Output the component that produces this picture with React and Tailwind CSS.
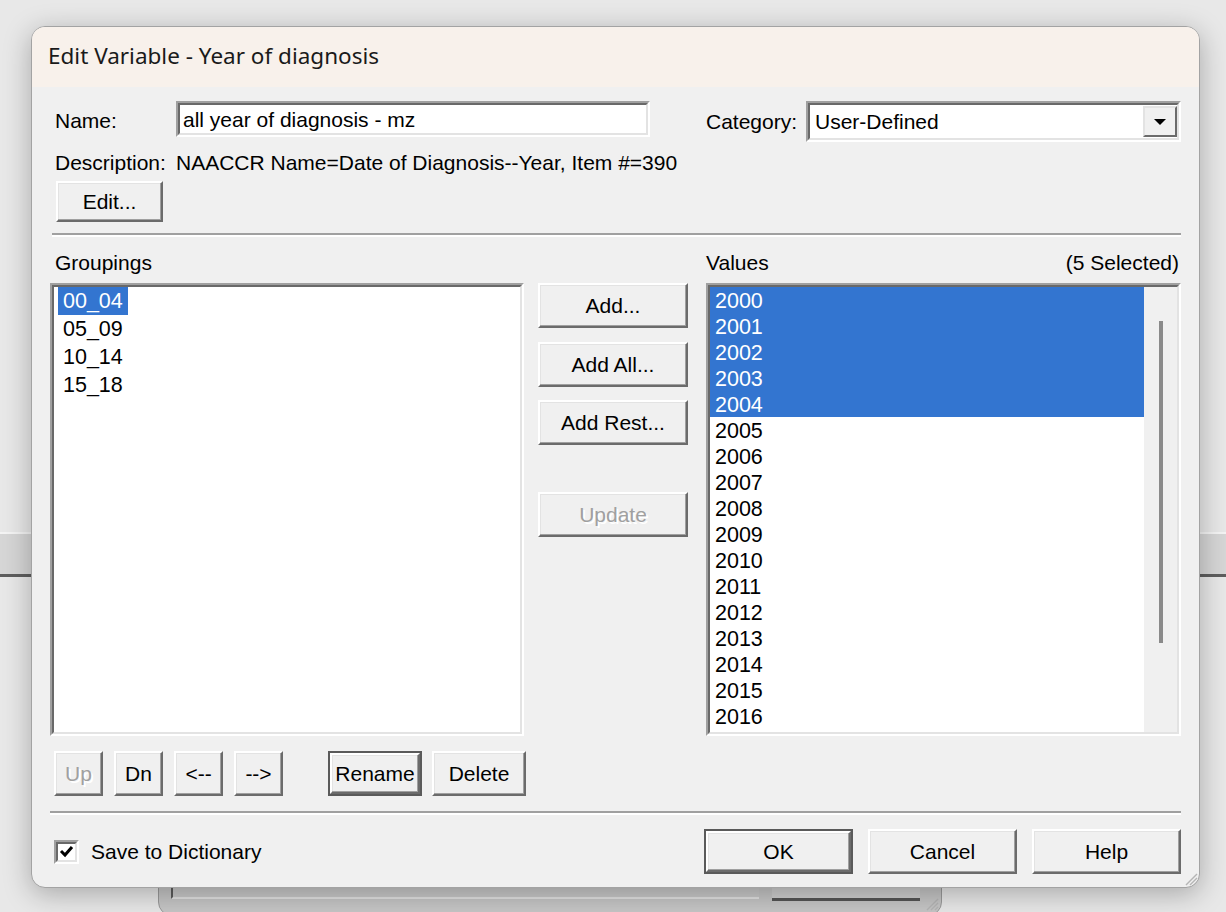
import React from 'react';

const GROUPINGS = ['00_04', '05_09', '10_14', '15_18'];
const VALUES = [
  '2000', '2001', '2002', '2003', '2004', '2005', '2006', '2007', '2008',
  '2009', '2010', '2011', '2012', '2013', '2014', '2015', '2016',
];
const SELECTED = 5;

// classic raised button; default buttons get the dark outer frame
function Btn({ children, className = '', disabled = false, isDefault = false }) {
  const inner = (
    <div className="flex h-full w-full items-center justify-center border-2 border-t-white border-l-white border-r-[#6b6b6b] border-b-[#6b6b6b] bg-[#f0f0f0] shadow-[inset_-1px_-1px_0_#a0a0a0,inset_1px_1px_0_#e3e3e3]">
      <span
        className={
          disabled
            ? 'text-[#a0a0a0] [text-shadow:2px_2px_0_#ffffff]'
            : 'text-black'
        }
      >
        {children}
      </span>
    </div>
  );
  if (isDefault) {
    return <div className={`border-2 border-[#5a5a5a] ${className}`}>{inner}</div>;
  }
  return <div className={className}>{inner}</div>;
}

// classic sunken field frame
function Sunken({ children, className = '', innerClass = '' }) {
  return (
    <div className={`border-2 border-t-[#a0a0a0] border-l-[#a0a0a0] border-r-white border-b-white ${className}`}>
      <div className={`h-full w-full border-2 border-t-[#696969] border-l-[#696969] border-r-[#e3e3e3] border-b-[#e3e3e3] bg-white ${innerClass}`}>
        {children}
      </div>
    </div>
  );
}

function Separator({ className = '' }) {
  return <div className={`h-[4px] border-t-2 border-b-2 border-t-[#a0a0a0] border-b-white ${className}`} />;
}

function ResizeGrip({ className = '' }) {
  return (
    <svg width="14" height="14" viewBox="0 0 14 14" className={className}>
      <g stroke="#b5b5b5" strokeWidth="1.4">
        <line x1="13" y1="2" x2="2" y2="13" />
        <line x1="13" y1="6" x2="6" y2="13" />
        <line x1="13" y1="10" x2="10" y2="13" />
      </g>
    </svg>
  );
}

export default function App() {
  return (
    <div className="relative h-[912px] w-[1226px] overflow-hidden bg-[#e8e8e8] font-['Liberation_Sans',Arial,sans-serif] text-[21px] leading-none text-black">
      {/* window behind: horizontal band */}
      <div className="absolute left-0 right-0 top-[532px] h-[45px] border-t-2 border-b-[3px] border-t-[#f4f4f4] border-b-[#5e5e5e] bg-[#d6d6d6]" />

      {/* window behind, bottom edge */}
      <div className="absolute left-[158px] top-[800px] h-[116px] w-[784px] rounded-b-[14px] border border-[#9a9a9a] bg-[#c6c6c6]">
        <div className="absolute left-[12px] top-[40px] h-[58px] w-[588px] border-l-2 border-b-2 border-l-[#5c5c5c] border-b-[#e2e2e2] bg-[#c9c9c9]" />
        <div className="absolute left-[613px] top-[40px] h-[60px] w-[148px] border-b-[3px] border-b-[#555555] bg-[#cfcfcf]" />
        <ResizeGrip className="absolute right-[2px] bottom-[4px]" />
      </div>

      {/* dialog */}
      <div className="absolute left-[31px] top-[26px] flex h-[862px] w-[1169px] flex-col overflow-hidden rounded-[14px] border border-[#a3a3a3] bg-[#f0f0f0] shadow-[0_6px_28px_rgba(0,0,0,0.28)]">
        {/* title bar */}
        <div className="flex h-[60px] shrink-0 items-center bg-[#f8f1eb] pl-[16px] pb-[2px] font-['Noto_Sans',sans-serif] text-[22.5px] text-[#1a1a1a]">
          Edit Variable - Year of diagnosis
        </div>

        <div className="flex flex-1 flex-col px-[18px]">
          {/* name / category */}
          <div className="mt-[14px] flex h-[41px] items-start">
            <div className="ml-[5px] flex h-[38px] w-[121px] items-center">Name:</div>
            <Sunken className="h-[36px] w-[474px]" innerClass="flex items-center pl-[3px]">
              all year of diagnosis - mz
            </Sunken>
            <div className="ml-[56px] flex h-[41px] w-[100px] items-center">Category:</div>
            <Sunken className="h-[41px] w-[375px]" innerClass="flex items-center justify-between pl-[5px]">
              <span>User-Defined</span>
              <div className="h-[31px] w-[34px]">
                <div className="flex h-full w-full items-center justify-center border-2 border-t-[#e3e3e3] border-l-[#e3e3e3] border-r-[#6b6b6b] border-b-[#6b6b6b] bg-[#f0f0f0]">
                  <svg width="14" height="8" viewBox="0 0 14 8">
                    <polygon points="1,1 13,1 7,7" fill="#000" />
                  </svg>
                </div>
              </div>
            </Sunken>
          </div>

          {/* description */}
          <div className="mt-[8px] flex h-[24px] items-center pl-[5px]">
            <span className="w-[121px]">Description:</span>
            <span>NAACCR Name=Date of Diagnosis--Year, Item #=390</span>
          </div>

          <Btn className="ml-[6px] mt-[7px] h-[41px] w-[107px]">Edit...</Btn>

          <Separator className="mt-[11px] ml-[2px]" />

          {/* list labels */}
          <div className="mt-[13px] flex h-[24px] items-center">
            <div className="w-[474px] pl-[5px]">Groupings</div>
            <div className="ml-[182px] flex flex-1 justify-between pr-[2px]">
              <span>Values</span>
              <span>(5 Selected)</span>
            </div>
          </div>

          {/* lists */}
          <div className="mt-[9px] flex h-[453px]">
            <Sunken className="h-full w-[474px]" innerClass="flex flex-col">
              {GROUPINGS.map((g, i) => (
                <div key={g} className="flex h-[28px] items-center">
                  <span
                    className={`ml-[4px] flex h-[28px] items-center px-[5px] pt-[1px] text-[21.5px] ${
                      i === 0 ? 'bg-[#3375d0] text-white' : ''
                    }`}
                  >
                    {g}
                  </span>
                </div>
              ))}
            </Sunken>

            <div className="ml-[14px] flex w-[150px] flex-col">
              <Btn className="h-[45px]">Add...</Btn>
              <Btn className="mt-[14px] h-[45px]">Add All...</Btn>
              <Btn className="mt-[13px] h-[45px]">Add Rest...</Btn>
              <Btn className="mt-[47px] h-[45px]" disabled>
                Update
              </Btn>
            </div>

            <Sunken className="ml-[18px] h-full w-[475px]" innerClass="flex overflow-hidden">
              <div className="flex flex-1 flex-col">
                {VALUES.map((v, i) => (
                  <div
                    key={v}
                    className={`flex h-[26px] shrink-0 items-center pl-[5px] pt-[3px] text-[21.5px] ${
                      i < SELECTED ? 'bg-[#3375d0] text-white' : ''
                    }`}
                  >
                    {v}
                  </div>
                ))}
              </div>
              <div className="flex w-[33px] shrink-0 justify-center bg-[#f0f0f0] pt-[34px]">
                <div className="h-[322px] w-[4px] bg-[#8a8a8a]" />
              </div>
            </Sunken>
          </div>

          {/* grouping buttons */}
          <div className="mt-[15px] flex h-[45px]">
            <Btn className="ml-[4px] w-[49px]" disabled>
              Up
            </Btn>
            <Btn className="ml-[11px] w-[49px]">Dn</Btn>
            <Btn className="ml-[11px] w-[49px]">&lt;--</Btn>
            <Btn className="ml-[11px] w-[49px]">--&gt;</Btn>
            <Btn className="ml-[45px] w-[94px]" isDefault>
              Rename
            </Btn>
            <Btn className="ml-[10px] w-[94px]">Delete</Btn>
          </div>

          <Separator className="mt-[15px]" />

          {/* footer */}
          <div className="mt-[14px] flex h-[45px] items-center">
            <Sunken className="ml-[4px] h-[24px] w-[25px]" innerClass="flex items-center justify-center">
              <svg width="15" height="13" viewBox="0 0 15 13">
                <polyline points="2,6 6,10 13,2" fill="none" stroke="#000" strokeWidth="3" />
              </svg>
            </Sunken>
            <span className="ml-[12px]">Save to Dictionary</span>
            <div className="ml-auto flex h-full">
              <Btn className="w-[149px]" isDefault>
                OK
              </Btn>
              <Btn className="ml-[15px] w-[149px]">Cancel</Btn>
              <Btn className="ml-[15px] w-[149px]">Help</Btn>
            </div>
          </div>
        </div>

        <ResizeGrip className="absolute right-[1px] bottom-[1px]" />
      </div>
    </div>
  );
}
